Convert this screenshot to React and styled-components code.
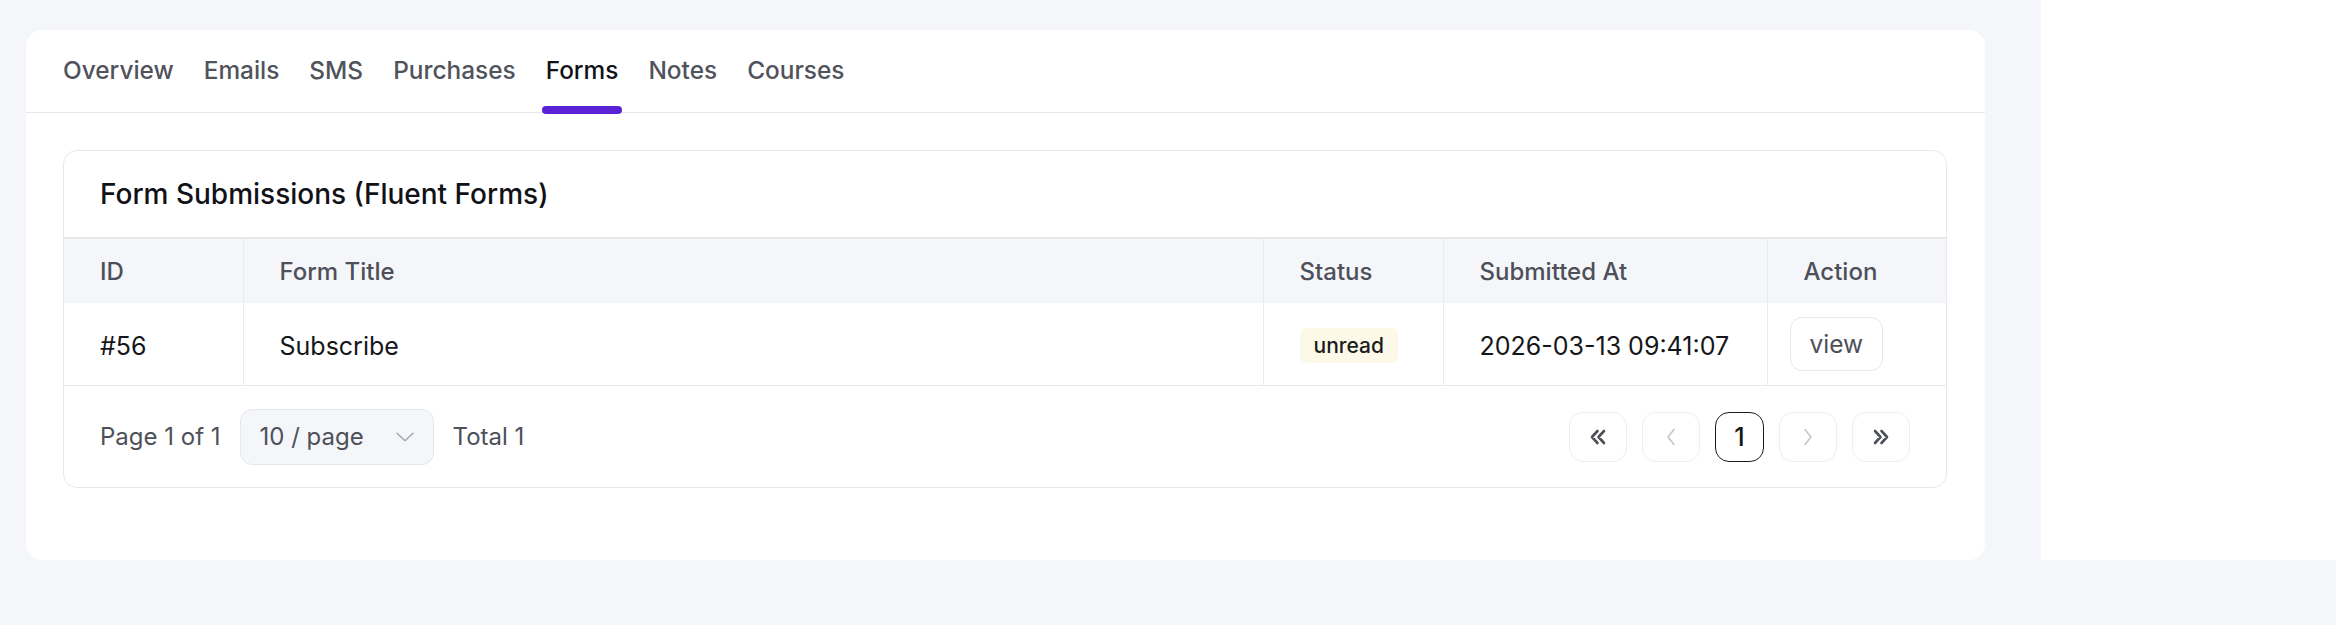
import styled, { createGlobalStyle } from 'styled-components';

const GlobalStyle = createGlobalStyle`
  html, body {
    margin: 0;
    padding: 0;
    background: #f5f6fa;
  }
  body {
    font-family: Inter, 'Liberation Sans', sans-serif;
    -webkit-font-smoothing: antialiased;
  }
  *, *::before, *::after {
    box-sizing: border-box;
  }
`;

const Page = styled.div`
  display: flex;
  align-items: stretch;
  width: 2336px;
`;

const Main = styled.main`
  width: 2041px;
  padding: 30px 56px 0 26px;
`;

const Sidebar = styled.aside`
  flex: 1;
  background: #ffffff;
`;

const Card = styled.section`
  background: #ffffff;
  border-radius: 16px;
  padding-bottom: 72px;
`;

const Tabs = styled.nav`
  display: flex;
  gap: 22px;
  height: 83px;
  padding: 0 33px;
  border-bottom: 1px solid #e6e8ec;
`;

const Tab = styled.button`
  position: relative;
  display: flex;
  align-items: center;
  padding: 0 4px 3px;
  border: 0;
  background: none;
  font-family: inherit;
  font-size: 24.4px;
  font-weight: 500;
  color: ${(p) => (p.$active ? '#111217' : '#50535b')};
  cursor: pointer;

  &::after {
    content: '';
    display: ${(p) => (p.$active ? 'block' : 'none')};
    position: absolute;
    left: 0;
    right: 0;
    bottom: -2px;
    height: 8px;
    border-radius: 4px;
    background: #5b21d6;
  }
`;

const Content = styled.div`
  padding: 37px 38px 0 37px;
`;

const Panel = styled.div`
  border: 1px solid #e6e8ec;
  border-radius: 14px;
  overflow: hidden;
`;

const PanelTitle = styled.h2`
  display: flex;
  align-items: center;
  height: 88px;
  margin: 0;
  padding: 0 36px;
  border-bottom: 2px solid #e6e8ec;
  font-size: 28px;
  font-weight: 500;
  color: #111217;
`;

const Table = styled.table`
  width: 100%;
  border-collapse: collapse;
  table-layout: fixed;
`;

const Th = styled.th`
  height: 64px;
  padding: 0 36px;
  text-align: left;
  font-size: 24px;
  font-weight: 500;
  color: #4d5059;
  background: #f5f6fa;
  border-left: 1px solid #e9ebef;

  &:first-child {
    border-left: 0;
  }
`;

const Td = styled.td`
  height: 82px;
  padding: 4px ${(p) => p.$pad || 36}px 0;
  font-size: 25px;
  color: #15161a;
  border-left: 1px solid #e9ebef;
  border-bottom: 1px solid #e6e8ec;

  &:first-child {
    border-left: 0;
  }
`;

const Badge = styled.span`
  display: inline-flex;
  align-items: center;
  height: 35px;
  padding: 0 14px;
  border-radius: 6px;
  background: #fdf9e9;
  font-size: 21px;
  font-weight: 500;
  color: #1b1c20;
`;

const ViewButton = styled.button`
  height: 54px;
  margin-top: -4px;
  padding: 0 19px;
  border: 1px solid #e6e8ec;
  border-radius: 12px;
  background: #ffffff;
  font-family: inherit;
  font-size: 24.5px;
  color: #4d5059;
`;

const Footer = styled.div`
  display: flex;
  align-items: center;
  justify-content: space-between;
  padding: 23px 36px 22px;
`;

const FooterInfo = styled.div`
  display: flex;
  align-items: center;
  gap: 19px;
  font-size: 24px;
  color: #4d5059;
`;

const SizeSelect = styled.div`
  display: flex;
  align-items: center;
  justify-content: space-between;
  width: 194px;
  height: 56px;
  padding: 0 19px;
  border: 1px solid #e4e7ec;
  border-radius: 12px;
  background: #f4f6fa;
  color: #4d5059;
`;

const Pager = styled.div`
  display: flex;
  align-items: center;
  gap: 15px;
`;

const PageButton = styled.button`
  display: flex;
  align-items: center;
  justify-content: center;
  width: ${(p) => (p.$current ? 49 : 58)}px;
  height: 50px;
  padding: 0;
  border: ${(p) => (p.$current ? '1.5px solid #1b1c20' : '1px solid #eceef1')};
  border-radius: 14px;
  background: #ffffff;
  font-family: inherit;
  font-size: 25px;
  font-weight: 500;
  color: #15161a;
`;

const DoubleChevron = ({ dir }) => (
  <svg width="18" height="16" viewBox="0 0 18 16" fill="none">
    <path
      d={dir === 'left' ? 'M8.5 2 3 8l5.5 6M15 2 9.5 8l5.5 6' : 'M3 2l5.5 6L3 14M9.5 2 15 8l-5.5 6'}
      stroke="#4d5059"
      strokeWidth="2.6"
      strokeLinecap="round"
      strokeLinejoin="round"
    />
  </svg>
);

const Chevron = ({ dir }) => (
  <svg width="10" height="18" viewBox="0 0 10 18" fill="none">
    <path
      d={dir === 'left' ? 'M8 1.5 2 9l6 7.5' : 'M2 1.5 8 9l-6 7.5'}
      stroke="#c0c4cb"
      strokeWidth="1.5"
      strokeLinecap="round"
      strokeLinejoin="round"
    />
  </svg>
);

const CaretDown = () => (
  <svg width="18" height="10" viewBox="0 0 18 10" fill="none">
    <path d="M1 1.2 9 8.8l8-7.6" stroke="#a3a7ae" strokeWidth="1.5" strokeLinecap="round" strokeLinejoin="round" />
  </svg>
);

const tabs = ['Overview', 'Emails', 'SMS', 'Purchases', 'Forms', 'Notes', 'Courses'];

const submissions = [
  { id: 56, title: 'Subscribe', status: 'unread', submittedAt: '2026-03-13 09:41:07' },
];

export default function App() {
  return (
    <>
      <GlobalStyle />
      <Page>
        <Main>
          <Card>
            <Tabs>
              {tabs.map((t) => (
                <Tab key={t} $active={t === 'Forms'}>
                  {t}
                </Tab>
              ))}
            </Tabs>
            <Content>
              <Panel>
                <PanelTitle>Form Submissions (Fluent Forms)</PanelTitle>
                <Table>
                  <colgroup>
                    <col style={{ width: 179 }} />
                    <col />
                    <col style={{ width: 180 }} />
                    <col style={{ width: 324 }} />
                    <col style={{ width: 179 }} />
                  </colgroup>
                  <thead>
                    <tr>
                      <Th>ID</Th>
                      <Th>Form Title</Th>
                      <Th>Status</Th>
                      <Th>Submitted At</Th>
                      <Th>Action</Th>
                    </tr>
                  </thead>
                  <tbody>
                    {submissions.map((s) => (
                      <tr key={s.id}>
                        <Td>#{s.id}</Td>
                        <Td>{s.title}</Td>
                        <Td>
                          <Badge>{s.status}</Badge>
                        </Td>
                        <Td>{s.submittedAt}</Td>
                        <Td $pad={22}>
                          <ViewButton>view</ViewButton>
                        </Td>
                      </tr>
                    ))}
                  </tbody>
                </Table>
                <Footer>
                  <FooterInfo>
                    <span>Page 1 of 1</span>
                    <SizeSelect>
                      <span>10 / page</span>
                      <CaretDown />
                    </SizeSelect>
                    <span>Total 1</span>
                  </FooterInfo>
                  <Pager>
                    <PageButton>
                      <DoubleChevron dir="left" />
                    </PageButton>
                    <PageButton>
                      <Chevron dir="left" />
                    </PageButton>
                    <PageButton $current>1</PageButton>
                    <PageButton>
                      <Chevron dir="right" />
                    </PageButton>
                    <PageButton>
                      <DoubleChevron dir="right" />
                    </PageButton>
                  </Pager>
                </Footer>
              </Panel>
            </Content>
          </Card>
        </Main>
        <Sidebar />
      </Page>
    </>
  );
}
